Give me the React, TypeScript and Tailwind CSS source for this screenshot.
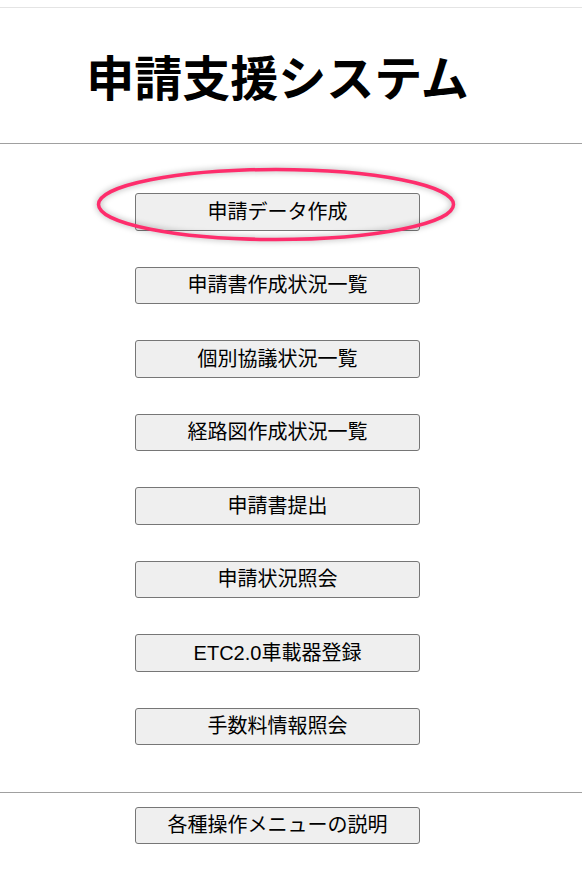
const menuItems = [
  "申請データ作成",
  "申請書作成状況一覧",
  "個別協議状況一覧",
  "経路図作成状況一覧",
  "申請書提出",
  "申請状況照会",
  "ETC2.0車載器登録",
  "手数料情報照会",
];

function MenuButton({ label }: { label: string }) {
  return (
    <button className="w-[285px] h-[37.5px] bg-[#efefef] border border-[#767676] rounded-[3px] text-[20px] leading-none text-black cursor-pointer">
      {label}
    </button>
  );
}

export default function App() {
  return (
    <main
      className="relative min-h-[872px] bg-white"
      style={{ fontFamily: '"Liberation Sans", "Noto Sans CJK JP", sans-serif' }}
    >
      <div className="pt-[7px]">
        <div className="h-px bg-[#e4e4e4]" />
      </div>

      <header className="w-[555px] h-[135px] flex items-center justify-center">
        <h1 className="text-[48px] font-bold leading-none text-black pt-[9px]">申請支援システム</h1>
      </header>
      <div className="h-px bg-[#a0a0a0]" />

      <nav className="w-[555px] flex flex-col items-center gap-9 pt-[49px]">
        {menuItems.map((item) => (
          <MenuButton key={item} label={item} />
        ))}
      </nav>

      <div className="mt-[46.5px] h-px bg-[#a0a0a0]" />
      <div className="w-[555px] flex justify-center pt-[14px]">
        <MenuButton label="各種操作メニューの説明" />
      </div>

      {/* annotation circle around the first menu item */}
      <svg
        className="absolute left-0 top-0 pointer-events-none"
        width="582"
        height="872"
        style={{ filter: "drop-shadow(0 0 3px rgba(0,0,0,0.35))" }}
      >
        <ellipse cx="276" cy="204.5" rx="177.5" ry="35" fill="none" stroke="#fe2d6c" strokeWidth="3.5" />
      </svg>
    </main>
  );
}
